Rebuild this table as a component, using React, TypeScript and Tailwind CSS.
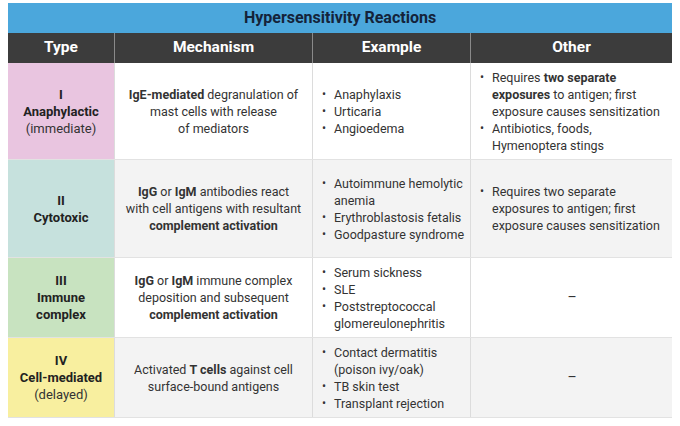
import type { ReactNode } from 'react';

type Row = {
    num: string;
    name: ReactNode;
    sub?: string;
    color: string;
    bg: string;
    mechanism: ReactNode;
    examples: ReactNode[];
    other: ReactNode[] | null;
};

const rows: Row[] = [
    {
        num: 'I',
        name: 'Anaphylactic',
        sub: '(immediate)',
        color: 'bg-[#e9c5e0]',
        bg: 'bg-white',
        mechanism: (
            <>
                <b>IgE-mediated</b> degranulation of
                <br />
                mast cells with release
                <br />
                of mediators
            </>
        ),
        examples: ['Anaphylaxis', 'Urticaria', 'Angioedema'],
        other: [
            <>
                Requires <b>two separate</b>
                <br />
                <b>exposures</b> to antigen; first exposure causes sensitization
            </>,
            <>Antibiotics, foods, Hymenoptera stings</>,
        ],
    },
    {
        num: 'II',
        name: 'Cytotoxic',
        color: 'bg-[#c6e1dd]',
        bg: 'bg-[#f3f3f3]',
        mechanism: (
            <>
                <b>IgG</b> or <b>IgM</b> antibodies react
                <br />
                with cell antigens with resultant
                <br />
                <b>complement activation</b>
            </>
        ),
        examples: ['Autoimmune hemolytic anemia', 'Erythroblastosis fetalis', 'Goodpasture syndrome'],
        other: [<>Requires two separate exposures to antigen; first exposure causes sensitization</>],
    },
    {
        num: 'III',
        name: (
            <>
                Immune
                <br />
                complex
            </>
        ),
        color: 'bg-[#c8e3c0]',
        bg: 'bg-white',
        mechanism: (
            <>
                <b>IgG</b> or <b>IgM</b> immune complex
                <br />
                deposition and subsequent
                <br />
                <b>complement activation</b>
            </>
        ),
        examples: ['Serum sickness', 'SLE', 'Poststreptococcal glomereulonephritis'],
        other: null,
    },
    {
        num: 'IV',
        name: 'Cell-mediated',
        sub: '(delayed)',
        color: 'bg-[#f8ef9f]',
        bg: 'bg-[#f3f3f3]',
        mechanism: (
            <>
                Activated <b>T cells</b> against cell
                <br />
                surface-bound antigens
            </>
        ),
        examples: ['Contact dermatitis (poison ivy/oak)', 'TB skin test', 'Transplant rejection'],
        other: null,
    },
];

const heights = ['h-[97px]', 'h-[98px]', 'h-[80px]', 'h-[80px]'];

function Bullets({ items }: { items: ReactNode[] }) {
    return (
        <ul>
            {items.map((item, i) => (
                <li key={i} className="flex">
                    <span className="w-[12px] shrink-0 text-[12px]">•</span>
                    <span>{item}</span>
                </li>
            ))}
        </ul>
    );
}

export default function App() {
    return (
        <div className="h-[426px] w-[680px] bg-white font-['Roboto',sans-serif] text-[#333]">
            <div className="ml-[8px] w-[664px] pt-[3px]">
                <div className="flex h-[30px] items-center justify-center bg-[#4ba7dc] text-[16px] font-bold text-[#14233a]">
                    Hypersensitivity Reactions
                </div>
                <div className="grid h-[30px] grid-cols-[106px_198px_158px_202px] bg-[#3c3c3c] text-[15.5px] font-bold text-white">
                    <div className="flex items-center justify-center">Type</div>
                    <div className="flex items-center justify-center border-l border-[#8a8a8a]">Mechanism</div>
                    <div className="flex items-center justify-center border-l border-[#8a8a8a]">Example</div>
                    <div className="flex items-center justify-center border-l border-[#8a8a8a]">Other</div>
                </div>
                {rows.map((r, i) => (
                    <div
                        key={r.num}
                        className={`grid grid-cols-[106px_198px_158px_202px] border-b border-[#e2e2e2] text-[12.5px] leading-[17px] ${heights[i]} ${r.bg}`}
                    >
                        <div className={`flex flex-col items-center justify-center text-center text-[13px] ${r.color}`}>
                            <div className="font-bold text-[#222]">{r.num}</div>
                            <div className="font-bold text-[#222]">{r.name}</div>
                            {r.sub && <div>{r.sub}</div>}
                        </div>
                        <div className="flex items-center justify-center border-l border-[#dcdcdc] text-center">
                            <div>{r.mechanism}</div>
                        </div>
                        <div className="flex items-center border-l border-[#dcdcdc] pl-[9px] pr-[4px]">
                            <Bullets items={r.examples} />
                        </div>
                        <div className="flex items-center border-l border-[#dcdcdc] pl-[9px] pr-[8px]">
                            {r.other ? (
                                <Bullets items={r.other} />
                            ) : (
                                <div className="w-full text-center text-[14px]">–</div>
                            )}
                        </div>
                    </div>
                ))}
            </div>
        </div>
    );
}
